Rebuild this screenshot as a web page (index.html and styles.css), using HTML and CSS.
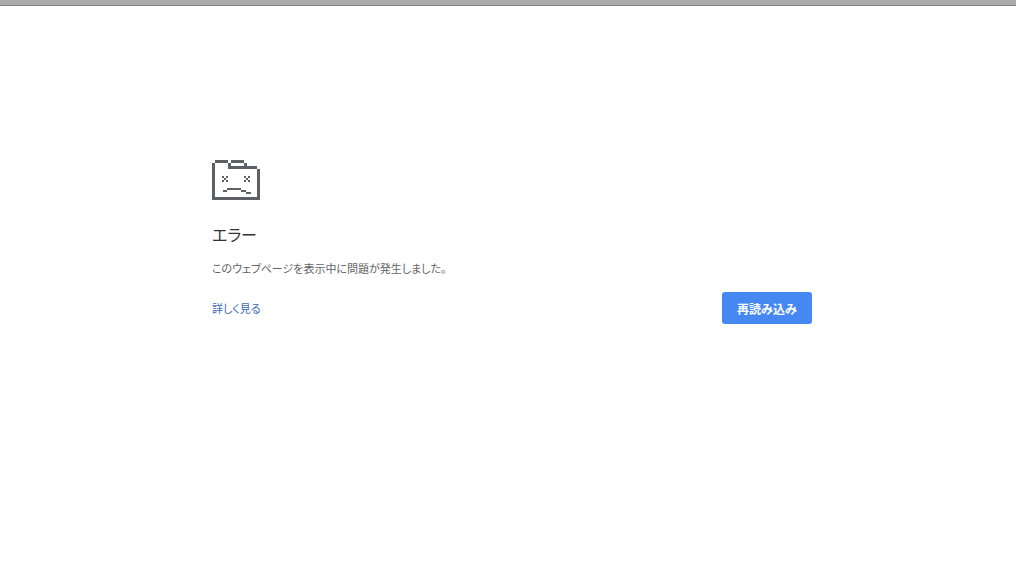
FILE: index.html
```html
<!DOCTYPE html>
<html lang="ja">
<head>
  <meta charset="UTF-8">
  <meta name="viewport" content="width=device-width, initial-scale=1.0">
  <title>エラー</title>
  <link rel="stylesheet" href="styles.css">
</head>
<body>
  <div class="top-bar"></div>
  <main class="container">
    <svg class="icon" viewBox="0 0 48 40" shape-rendering="crispEdges" aria-hidden="true">
      <!-- folder outline -->
      <path d="M3 0h13v3H3zM0 3h3v37H0zM16 3h3v6h-3zM19 0h13v3H19zM32 3h3v3h-3zM19 6h26v3H19zM45 9h3v31h-3zM3 37h42v3H3z"/>
      <!-- eyes -->
      <path d="M10 16h2v2h-2zM14 16h2v2h-2zM12 18h2v2h-2zM10 20h2v2h-2zM14 20h2v2h-2zM32 16h2v2h-2zM36 16h2v2h-2zM34 18h2v2h-2zM32 20h2v2h-2zM36 20h2v2h-2z"/>
      <!-- mouth -->
      <path d="M15 28h14v2H15zM11 30h4v2h-4zM29 30h5v2h-5zM34 32h5v2h-5z"/>
    </svg>
    <h1>エラー</h1>
    <p>このウェブページを表示中に問題が発生しました。</p>
    <div class="button-container">
      <a href="#" class="details">詳しく見る</a>
      <button type="button" class="reload">再読み込み</button>
    </div>
  </main>
</body>
</html>
```
FILE: styles.css
```css
body {
  margin: 0;
  padding-left: 8px;
  background-color: #ffffff;
  color: #646464;
  font-family: "Noto Sans CJK JP", sans-serif;
  font-size: 11px;
  font-feature-settings: "palt";
}

.top-bar {
  height: 5px;
  margin-left: -8px;
  background-color: #ababab;
  border-bottom: 1px solid #7f7f7f;
}

.container {
  max-width: 600px;
  margin: 0 auto;
  padding: 154px 24px 0;
}

.icon {
  display: block;
  width: 48px;
  height: 40px;
  fill: #5f6065;
}

h1 {
  margin: 20px 0 12px;
  color: #333333;
  font-size: 16px;
  font-weight: 400;
  line-height: 28px;
}

p {
  margin: 0;
  line-height: 16px;
}

.button-container {
  display: flex;
  justify-content: space-between;
  align-items: center;
  margin-top: 16px;
}

.details {
  color: #3b6cb7;
  text-decoration: none;
}

.reload {
  min-width: 90px;
  height: 32px;
  padding: 0 15px;
  border: none;
  border-radius: 3px;
  background-color: #4688f1;
  color: #ffffff;
  font-family: inherit;
  font-size: 12px;
  font-weight: 700;
  cursor: pointer;
}

.reload:hover {
  background-color: #3b78e7;
}
```
